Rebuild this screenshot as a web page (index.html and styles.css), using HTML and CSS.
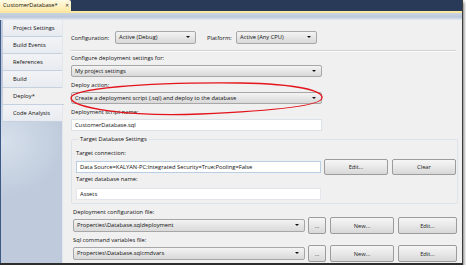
FILE: index.html
```html
<!DOCTYPE html>
<html lang="en">
<head>
  <meta charset="UTF-8">
  <title>CustomerDatabase - Deploy</title>
  <link rel="stylesheet" href="styles.css">
</head>
<body>
  <div class="window">
    <div class="doc-tabs">
      <div class="doc-tab">CustomerDatabase* <span class="close">&#x2715;</span></div>
    </div>
    <div class="doc-band"></div>

    <div class="pane">
      <nav class="side">
        <div class="side-tab">Project Settings</div>
        <div class="side-tab">Build Events</div>
        <div class="side-tab">References</div>
        <div class="side-tab">Build</div>
        <div class="side-tab active">Deploy*</div>
        <div class="side-tab">Code Analysis</div>
      </nav>

      <main class="content">
        <div class="config-row">
          <span class="lbl cfg-lbl">Configuration:</span>
          <div class="combo cfg-combo">Active (Debug)</div>
          <span class="lbl plat-lbl">Platform:</span>
          <div class="combo cfg-combo">Active (Any CPU)</div>
        </div>
        <div class="separator"></div>

        <div class="field">
          <span class="lbl">Configure deployment settings for:</span>
          <div class="combo wide">My project settings</div>
        </div>
        <div class="field">
          <span class="lbl">Deploy action:</span>
          <div class="combo wide">Create a deployment script (.sql) and deploy to the database</div>
        </div>
        <div class="field">
          <span class="lbl">Deployment script name:</span>
          <div class="textbox wide">CustomerDatabase.sql</div>
        </div>

        <fieldset class="group">
          <legend>Target Database Settings</legend>
          <span class="lbl">Target connection:</span>
          <div class="row">
            <div class="textbox conn">Data Source=KALYAN-PC;Integrated Security=True;Pooling=False</div>
            <button class="btn big">Edit...</button>
            <button class="btn big">Clear</button>
          </div>
          <span class="lbl">Target database name:</span>
          <div class="textbox conn db">Assets</div>
        </fieldset>

        <div class="files">
          <span class="lbl">Deployment configuration file:</span>
          <div class="row">
            <div class="combo file">Properties\Database.sqldeployment</div>
            <button class="btn dots">...</button>
            <button class="btn big">New...</button>
            <button class="btn edit">Edit...</button>
          </div>
          <span class="lbl">Sql command variables file:</span>
          <div class="row">
            <div class="combo file">Properties\Database.sqlcmdvars</div>
            <button class="btn dots">...</button>
            <button class="btn big">New...</button>
            <button class="btn edit">Edit...</button>
          </div>
        </div>
      </main>
    </div>

    <!-- red hand drawn ring round the deploy action -->
    <svg class="ring" width="466" height="268" viewBox="0 0 466 268">
      <path d="M71,98 C71,89 140,82 240,83 C300,84 323,91 322,98 C321,106 270,111 200,114 C130,117 71,108 71,98 Z" fill="none" stroke="#e3141b" stroke-width="1.3"/>
    </svg>
  </div>
</body>
</html>
```

FILE: styles.css
```css
/* Deploy properties page */
body {
  margin: 0;
  background: #fff;
  font-family: "Open Sans", "Noto Sans", sans-serif;
  font-size: 5.75px;
  color: #111;
}

.window {
  position: relative;
  width: 462px;
  height: 263px;
  border-right: 1px solid #3c3c3c;
  border-bottom: 2px solid #2e2e2e;
  box-shadow: 1px 2px 3px rgba(0, 0, 0, 0.55);
  display: flex;
  flex-direction: column;
  overflow: hidden;
}

.doc-tabs {
  height: 11px;
  background: #293a58;
  display: flex;
}

.doc-tab {
  width: 66px;
  padding-left: 3px;
  background: linear-gradient(#fffbe4, #ffeaa8);
  border-radius: 0 2px 0 0;
  line-height: 11px;
  display: flex;
  justify-content: space-between;
  padding-right: 2px;
}

.doc-tab .close {
  font-size: 5px;
  color: #333;
}

.doc-band {
  height: 9px;
  border-top: 2px solid #fbe7a0;
  box-sizing: border-box;
  background: linear-gradient(#c9d3e2, #bcc8da 60%, #e8edf4);
}

.pane {
  flex: 1;
  display: flex;
}

.side {
  width: 63px;
  padding-left: 2px;
  box-sizing: border-box;
  background: radial-gradient(ellipse 70px 60px at 0 122px, #d7e0ec, #bfcbdc 90%), #bccadb;
  border-left: 1px solid #3d5a86;
}

.side-tab {
  height: 16px;
  line-height: 16px;
  padding-left: 10px;
  background: linear-gradient(#f2f3f6, #e8ebf0);
  border-bottom: 1px solid #c6d1df;
}

.side-tab.active {
  background: #f0f0f0;
  margin-right: -2px;
  position: relative;
}

.content {
  flex: 1;
  background: #f0f0f0;
  border-left: 1px solid #e2e7ee;
  padding: 10px 4px 0 8px;
  display: flex;
  flex-direction: column;
}

.lbl {
  display: block;
  height: 8px;
  line-height: 8px;
  white-space: nowrap;
}

.config-row {
  display: flex;
  align-items: center;
  height: 13px;
  margin-top: 1px;
}

.cfg-lbl {
  width: 44px;
}

.plat-lbl {
  width: 29px;
  margin-left: 11px;
}

.combo {
  position: relative;
  box-sizing: border-box;
  height: 12px;
  line-height: 10px;
  padding-left: 3px;
  border: 1px solid #a7a7a7;
  border-radius: 2px;
  background: linear-gradient(#f4f4f4, #e6e6e6 50%, #d9d9d9);
  white-space: nowrap;
  overflow: hidden;
}

.combo::after {
  content: "";
  position: absolute;
  right: 5px;
  top: 4px;
  border-left: 2px solid transparent;
  border-right: 2px solid transparent;
  border-top: 2px solid #111;
}

.cfg-combo {
  width: 81px;
  height: 13px;
  line-height: 11px;
}

.separator {
  margin-top: 6px;
  width: 385px;
  height: 1px;
  background: #d3d3d3;
  border-bottom: 1px solid #fbfbfb;
}

.field {
  margin-top: 2px;
  display: flex;
  flex-direction: column;
  gap: 3px;
}

.field + .field {
  margin-top: 4px;
}

.wide {
  width: 251px;
}

.textbox {
  box-sizing: border-box;
  height: 12px;
  line-height: 10px;
  padding-left: 3px;
  background: #fff;
  border: 1px solid #dde2e8;
  white-space: nowrap;
  overflow: hidden;
}

.group {
  margin: 4px 0 0 0;
  width: 386px;
  box-sizing: border-box;
  padding: 6px 1px 3px 4px;
  border: 1px solid #dde3ea;
  border-radius: 2px;
}

.group legend {
  padding: 0 2px;
  margin-left: 2px;
  line-height: 8px;
}

.row {
  display: flex;
  align-items: center;
  height: 16px;
  margin-top: 2px;
}

.conn {
  width: 245px;
  border-color: #b9cde3;
}

.db {
  margin-top: 5px;
  height: 12px;
  border-color: #e3e7ec;
}

.btn {
  box-sizing: border-box;
  height: 16px;
  padding: 0;
  font: inherit;
  color: #1c1c1c;
  border: 1px solid #9c9c9c;
  border-radius: 2px;
  background: linear-gradient(#f6f6f6, #e8e8e8 50%, #d8d8d8);
}

.big {
  width: 64px;
  margin-left: 3px;
}

.row .big + .big {
  margin-left: 4px;
}

.files {
  margin-top: 4px;
  padding-left: 2px;
  display: flex;
  flex-direction: column;
}

.files .row {
  height: 17px;
  margin-top: 0;
}

.files .row + .lbl {
  margin-top: 2px;
}

.files .lbl + .row {
  margin-top: 1px;
}

.file {
  width: 232px;
  height: 13px;
  line-height: 11px;
}

.dots {
  width: 18px;
  height: 17px;
  margin-left: 3px;
}

.files .big {
  height: 17px;
  margin-left: 4px;
}

.edit {
  width: 59px;
  height: 17px;
  margin-left: 4px;
}

.ring {
  position: absolute;
  left: 0;
  top: 0;
  pointer-events: none;
}
```
